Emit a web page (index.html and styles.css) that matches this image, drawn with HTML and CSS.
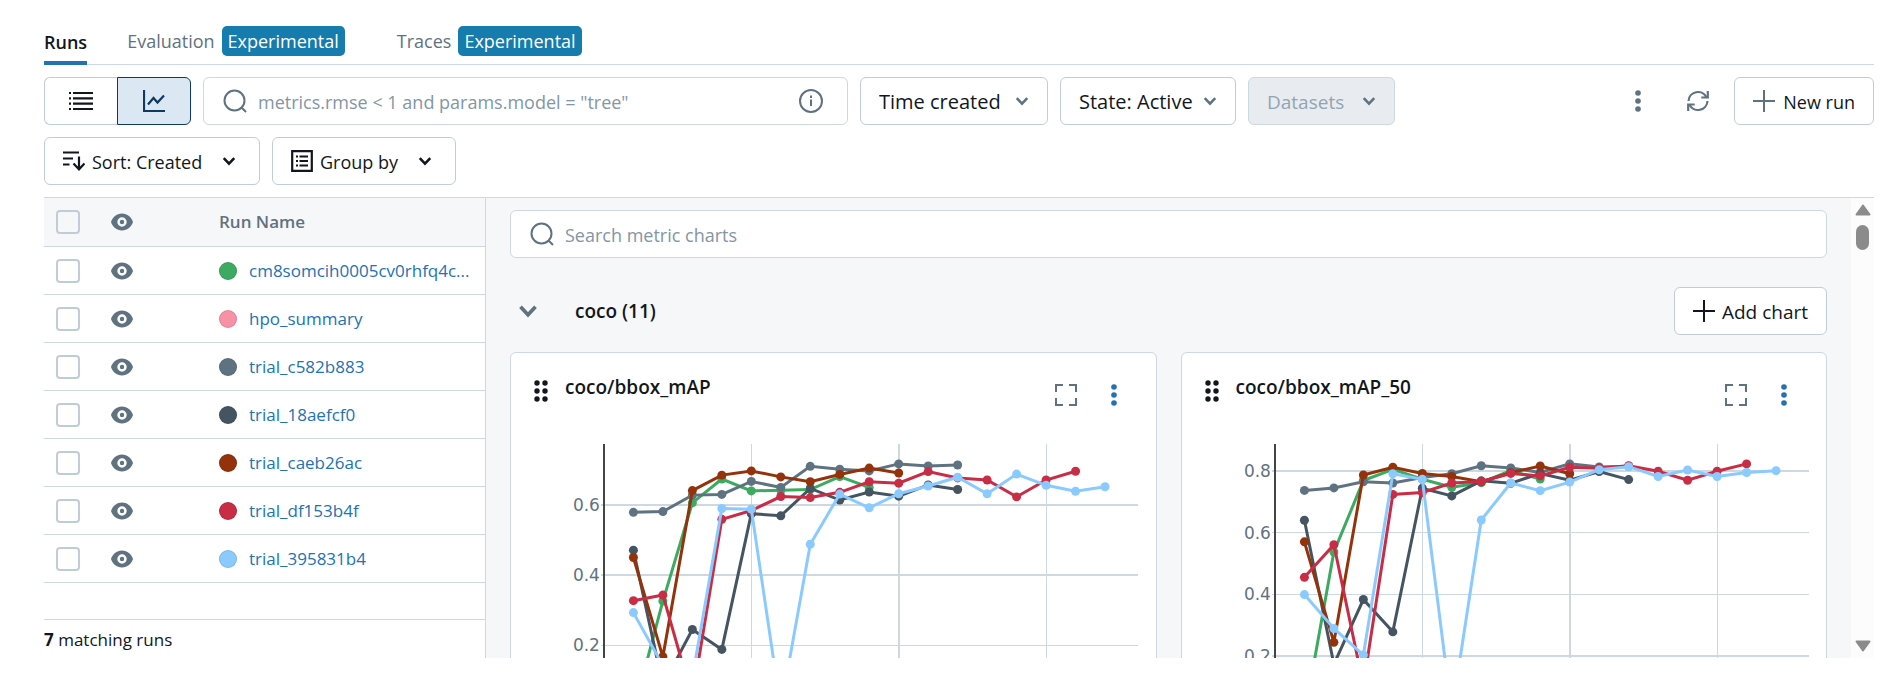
FILE: index.html
```html
<!DOCTYPE html>
<html lang="en">
<head>
<meta charset="utf-8">
<title>Runs</title>
<link rel="stylesheet" href="styles.css">
</head>
<body>
<svg class="sprite" aria-hidden="true">
  <symbol id="chevron" viewBox="0 0 12 12"><path d="M1.5 3.5 6 8.3l4.500-4.800" fill="none" stroke="currentColor" stroke-width="2.200"/></symbol>
  <symbol id="search" viewBox="0 0 24 24"><circle cx="11.500" cy="11.500" r="10" fill="none" stroke="currentColor" stroke-width="2"/><path d="m18.500 18.500 4.500 4.500" stroke="currentColor" stroke-width="2"/></symbol>
  <symbol id="plus" viewBox="0 0 22 22"><path d="M11 0v22M0 11h22" stroke="currentColor" stroke-width="2"/></symbol>
  <symbol id="kebab" viewBox="0 0 6 22"><g fill="currentColor"><circle cx="3" cy="3" r="2.800"/><circle cx="3" cy="11" r="2.800"/><circle cx="3" cy="19" r="2.800"/></g></symbol>
  <symbol id="eye" viewBox="0 0 22 18"><path fill="currentColor" fill-rule="evenodd" d="M11 .5C5.500.5 1.500 4.500 0 9c1.500 4.500 5.500 8.500 11 8.500S20.500 13.500 22 9C20.500 4.500 16.500.5 11 .5Zm0 3.800a4.700 4.700 0 1 1 0 9.400 4.700 4.700 0 0 1 0-9.400Z"/><circle cx="11" cy="9" r="2.200" fill="currentColor"/></symbol>
  <symbol id="grip" viewBox="0 0 14 22"><g fill="currentColor"><circle cx="3" cy="3" r="2.700"/><circle cx="11" cy="3" r="2.700"/><circle cx="3" cy="11" r="2.700"/><circle cx="11" cy="11" r="2.700"/><circle cx="3" cy="19" r="2.700"/><circle cx="11" cy="19" r="2.700"/></g></symbol>
  <symbol id="expand" viewBox="0 0 22 22"><path d="M1 8V1h7M14 1h7v7M21 14v7h-7M8 21H1v-7" fill="none" stroke="currentColor" stroke-width="2"/></symbol>
</svg>

<nav class="tabs">
  <a class="tab tab-active" href="#runs">Runs</a>
  <a class="tab" href="#evaluation">Evaluation <span class="badge">Experimental</span></a>
  <a class="tab" href="#traces">Traces <span class="badge">Experimental</span></a>
</nav>

<div class="toolbar">
  <div class="segmented">
    <button class="segment" type="button" aria-label="List view">
      <svg width="24" height="20" viewBox="0 0 24 20"><path d="M4 2h20M4 7.300h20M4 12.600h20M4 18h20M0 2h2M0 7.300h2M0 12.600h2M0 18h2" stroke="currentColor" stroke-width="2.200"/></svg>
    </button>
    <button class="segment segment-active" type="button" aria-label="Chart view">
      <svg width="22" height="22" viewBox="0 0 22 22"><path d="M1 0v21h21M5 14.500l5.500-6.500 4 4.500L21 5.500" fill="none" stroke="currentColor" stroke-width="2.200"/></svg>
    </button>
  </div>
  <label class="search-box search-runs">
    <svg class="icon" width="24" height="24"><use href="#search"/></svg>
    <input type="text" aria-label="Search runs" placeholder="metrics.rmse &lt; 1 and params.model = &quot;tree&quot;">
    <svg class="icon" width="24" height="24" viewBox="0 0 24 24"><circle cx="12" cy="12" r="11" fill="none" stroke="currentColor" stroke-width="2"/><path d="M12 10.500V17M12 6.500v2.500" stroke="currentColor" stroke-width="2"/></svg>
  </label>
  <label class="dropdown dropdown-time">
    <select aria-label="Time created"><option>Time created</option></select>
    <svg class="icon" width="14" height="14"><use href="#chevron"/></svg>
  </label>
  <label class="dropdown dropdown-state">
    <select aria-label="State"><option>State: Active</option></select>
    <svg class="icon" width="14" height="14"><use href="#chevron"/></svg>
  </label>
  <label class="dropdown dropdown-datasets">
    <select aria-label="Datasets" disabled><option>Datasets</option></select>
    <svg class="icon" width="14" height="14"><use href="#chevron"/></svg>
  </label>
  <div class="toolbar-end">
    <button class="icon-button" type="button" aria-label="More options"><svg width="6" height="22"><use href="#kebab"/></svg></button>
    <button class="icon-button" type="button" aria-label="Refresh">
      <svg width="22" height="22" viewBox="0 0 22 22"><path d="M1.500 11A9.500 9.500 0 0 1 19.500 7.300M20.500 11A9.500 9.500 0 0 1 2.500 14.700" fill="none" stroke="currentColor" stroke-width="2.200"/><path d="M20.800 1v6.500h-6.500M1.200 21v-6.500h6.500" fill="none" stroke="currentColor" stroke-width="2.200"/></svg>
    </button>
    <button class="button button-new" type="button"><svg class="icon" width="22" height="22"><use href="#plus"/></svg><span>New run</span></button>
  </div>
</div>

<div class="toolbar toolbar-second">
  <label class="dropdown dropdown-sort">
    <svg width="22" height="20" viewBox="0 0 22 20"><path d="M0 1.500h16M0 7.500h10M0 13.500h6.500M16 5.500V18M10.500 12.500l5.500 5.800 5.500-5.800" fill="none" stroke="currentColor" stroke-width="2.200"/></svg>
    <select aria-label="Sort"><option>Sort: Created</option></select>
    <svg width="14" height="14"><use href="#chevron"/></svg>
  </label>
  <label class="dropdown dropdown-group">
    <svg width="22" height="22" viewBox="0 0 22 22"><path d="M1.200 1.200h19.600v19.600H1.200zM8.500 6.500h8.500M8.500 11h8.500M8.500 15.500h8.500M5 6.500h2M5 11h2M5 15.500h2" fill="none" stroke="currentColor" stroke-width="2.200"/></svg>
    <select aria-label="Group by"><option>Group by</option></select>
    <svg width="14" height="14"><use href="#chevron"/></svg>
  </label>
</div>

<main class="content">
  <section class="runs">
    <table class="runs-table">
      <colgroup><col class="col-check"><col class="col-eye"><col></colgroup>
      <thead>
        <tr><th><input type="checkbox" aria-label="Select all runs"></th><th><svg width="22" height="18"><use href="#eye"/></svg></th><th>Run Name</th></tr>
      </thead>
      <tbody>
        <tr><td><input type="checkbox" aria-label="Select run"></td><td><svg width="22" height="18"><use href="#eye"/></svg></td><td><span class="run"><i class="dot dot-green"></i><a href="#run1">cm8somcih0005cv0rhfq4c...</a></span></td></tr>
        <tr><td><input type="checkbox" aria-label="Select run"></td><td><svg width="22" height="18"><use href="#eye"/></svg></td><td><span class="run"><i class="dot dot-pink"></i><a href="#run2">hpo_summary</a></span></td></tr>
        <tr><td><input type="checkbox" aria-label="Select run"></td><td><svg width="22" height="18"><use href="#eye"/></svg></td><td><span class="run"><i class="dot dot-slate"></i><a href="#run3">trial_c582b883</a></span></td></tr>
        <tr><td><input type="checkbox" aria-label="Select run"></td><td><svg width="22" height="18"><use href="#eye"/></svg></td><td><span class="run"><i class="dot dot-dark"></i><a href="#run4">trial_18aefcf0</a></span></td></tr>
        <tr><td><input type="checkbox" aria-label="Select run"></td><td><svg width="22" height="18"><use href="#eye"/></svg></td><td><span class="run"><i class="dot dot-brown"></i><a href="#run5">trial_caeb26ac</a></span></td></tr>
        <tr><td><input type="checkbox" aria-label="Select run"></td><td><svg width="22" height="18"><use href="#eye"/></svg></td><td><span class="run"><i class="dot dot-red"></i><a href="#run6">trial_df153b4f</a></span></td></tr>
        <tr><td><input type="checkbox" aria-label="Select run"></td><td><svg width="22" height="18"><use href="#eye"/></svg></td><td><span class="run"><i class="dot dot-blue"></i><a href="#run7">trial_395831b4</a></span></td></tr>
      </tbody>
    </table>
    <p class="runs-footer"><b>7</b> matching runs</p>
  </section>

  <section class="charts">
    <label class="search-box">
      <svg class="icon" width="24" height="24"><use href="#search"/></svg>
      <input type="text" aria-label="Search metric charts" placeholder="Search metric charts">
    </label>
    <div class="section-head">
      <button class="collapse" type="button" aria-label="Collapse section"><svg width="20" height="20"><use href="#chevron"/></svg></button>
      <h2>coco (11)</h2>
      <button class="button button-add" type="button"><svg width="22" height="22"><use href="#plus"/></svg><span>Add chart</span></button>
    </div>
    <div class="cards">
      <article class="card">
        <header class="card-head">
          <svg class="grip" width="14" height="22"><use href="#grip"/></svg>
          <h3>coco/bbox_mAP</h3>
          <button class="icon-button" type="button" aria-label="Full screen"><svg width="22" height="22"><use href="#expand"/></svg></button>
          <button class="icon-button card-menu" type="button" aria-label="Chart options"><svg width="6" height="22"><use href="#kebab"/></svg></button>
        </header>
        <svg class="chart" id="chart-map" viewBox="0 0 645 320" role="img" aria-label="coco/bbox_mAP"></svg>
      </article>
      <article class="card">
        <header class="card-head">
          <svg class="grip" width="14" height="22"><use href="#grip"/></svg>
          <h3>coco/bbox_mAP_50</h3>
          <button class="icon-button" type="button" aria-label="Full screen"><svg width="22" height="22"><use href="#expand"/></svg></button>
          <button class="icon-button card-menu" type="button" aria-label="Chart options"><svg width="6" height="22"><use href="#kebab"/></svg></button>
        </header>
        <svg class="chart" id="chart-map50" viewBox="0 0 645 320" role="img" aria-label="coco/bbox_mAP_50"></svg>
      </article>
    </div>
  </section>

  <div class="scrollbar" aria-hidden="true">
    <svg width="16" height="12" viewBox="0 0 16 12"><path d="M8 1.500 14.500 10.500H1.500Z" fill="currentColor" stroke="currentColor" stroke-width="2" stroke-linejoin="round"/></svg>
    <span class="thumb"></span>
    <svg class="scroll-down" width="16" height="12" viewBox="0 0 16 12"><path d="M8 10.500 14.500 1.500H1.500Z" fill="currentColor" stroke="currentColor" stroke-width="2" stroke-linejoin="round"/></svg>
  </div>
</main>
<script src="charts.js"></script>
</body>
</html>
```

FILE: charts.js
```js
const LEFT = 93, RIGHT = 627, TOP = 16, BOTTOM = 310, STEP = 29.5;

function add(parent, name, attrs, text) {
  const node = document.createElementNS("http://www.w3.org/2000/svg", name);
  for (const key in attrs) node.setAttribute(key, attrs[key]);
  if (text) node.textContent = text;
  parent.appendChild(node);
}

function drawChart(id, scale, series) {
  const svg = document.getElementById(id);
  const yOf = v => scale.refY + (scale.ref - v) * scale.perUnit;
  const xOf = n => LEFT + n * STEP;
  for (const [n, w] of [[5, 1], [10, 2], [15, 1]]) {
    add(svg, "line", { x1: xOf(n), x2: xOf(n), y1: TOP, y2: BOTTOM, class: "grid", "stroke-width": w });
  }
  for (const [v, w] of scale.ticks) {
    add(svg, "line", { x1: LEFT - 3, x2: RIGHT, y1: yOf(v), y2: yOf(v), class: "grid", "stroke-width": w });
    add(svg, "text", { x: LEFT - 4, y: yOf(v) + 6, class: "tick" }, v.toFixed(1));
  }
  add(svg, "line", { x1: LEFT, x2: LEFT, y1: TOP, y2: BOTTOM, class: "axis" });
  for (const [name, values] of series) {
    const points = values.map((v, i) => [xOf(i + 1), yOf(v)]);
    add(svg, "polyline", { points: points.join(" "), class: "line line-" + name });
    for (const [cx, cy] of points) add(svg, "circle", { cx, cy, r: 4.5, class: "mark-" + name });
  }
}

drawChart("chart-map", { ref: 0.6, refY: 77, perUnit: 351, ticks: [[0.6, 2], [0.4, 2], [0.2, 1]] }, [
  ["green", [.01, .326, .606, .674, .64, .642, .644, .681, .65]],
  ["slate", [.579, .581, .628, .63, .667, .65, .71, .702, .697, .717, .711, .714]],
  ["dark", [.471, .086, .245, .188, .575, .569, .647, .614, .637, .625, .657, .644]],
  ["brown", [.45, .167, .641, .685, .697, .68, .666, .687, .705, .691]],
  ["red", [.327, .343, .05, .559, .584, .624, .621, .636, .666, .662, .695, .677, .671, .623, .671, .696]],
  ["blue", [.293, .142, .108, .59, .588, .02, .488, .631, .592, .632, .654, .679, .632, .688, .656, .639, .652]]
]);

drawChart("chart-map50", { ref: 0.8, refY: 43, perUnit: 308.5, ticks: [[0.8, 2], [0.6, 1], [0.4, 1], [0.2, 2]] }, [
  ["green", [.005, .537, .769, .805, .773, .747, .762, .801, .774]],
  ["slate", [.737, .745, .765, .761, .779, .791, .817, .81, .795, .823, .813, .815]],
  ["dark", [.64, .173, .383, .278, .744, .719, .768, .76, .792, .77, .798, .772]],
  ["brown", [.57, .244, .787, .812, .792, .782, .765, .794, .816, .791]],
  ["red", [.455, .561, .105, .724, .73, .761, .766, .792, .784, .812, .809, .817, .799, .77, .799, .823]],
  ["blue", [.399, .289, .203, .791, .773, .015, .641, .761, .736, .764, .804, .814, .782, .803, .782, .795, .801]]
]);
```

FILE: styles.css
```css
* { box-sizing: border-box; }

body {
  margin: 0;
  height: 100vh;
  padding: 20px 23px 19px 44px;
  display: flex;
  flex-direction: column;
  background: #fff;
  color: #11171c;
  font: 18px/24px "Open Sans", "Noto Sans", sans-serif;
}

svg { flex: none; display: block; }
button, input, select { font: inherit; color: inherit; }
h2, h3, p { margin: 0; font-size: inherit; }
a { text-decoration: none; }

.sprite { position: absolute; width: 0; height: 0; }
.icon { color: #5f7281; }

.tabs {
  display: flex;
  gap: 40px;
  flex: none;
  border-bottom: 1px solid #cdd8e1;
}
.tab {
  display: flex;
  align-items: center;
  gap: 7px;
  height: 44px;
  padding: 0 12px 2px 0;
  color: #5f7281;
}
.tab-active {
  margin-bottom: -1px;
  height: 45px;
  padding: 2px 0 0;
  border-bottom: 4px solid #2272b4;
  color: #11171c;
  font-weight: 600;
}
.badge {
  height: 30px;
  padding: 0 6px;
  border-radius: 5px;
  background: #157cad;
  color: #fff;
  line-height: 30px;
}

.toolbar {
  display: flex;
  flex: none;
  gap: 12px;
  padding-top: 12px;
}
.toolbar-second { padding-bottom: 12px; }
.toolbar-end {
  display: flex;
  align-items: center;
  gap: 12px;
  margin-left: auto;
}

.segmented { display: flex; }
.segment {
  width: 73px;
  height: 48px;
  display: flex;
  align-items: center;
  justify-content: center;
  border: 1px solid #c0cdd8;
  border-right: 0;
  border-radius: 6px 0 0 6px;
  background: #fff;
}
.segment-active {
  width: 74px;
  border: 1px solid #0e3a60;
  border-radius: 0 6px 6px 0;
  background: #dbe7f2;
  color: #0e3a60;
}

.search-box {
  display: flex;
  align-items: center;
  gap: 11px;
  height: 48px;
  padding: 0 24px 0 19px;
  border: 1px solid #cdd8e1;
  border-radius: 6px;
  background: #fff;
}
.search-runs { flex: 0 1 645px; }
.search-box input {
  flex: 1;
  min-width: 0;
  padding: 2px 0 0;
  border: 0;
  outline: 0;
  background: none;
}
.search-box input::placeholder { color: #8396a5; opacity: 1; }

.dropdown {
  display: flex;
  align-items: center;
  height: 48px;
  padding: 0 18px;
  border: 1px solid #c0cdd8;
  border-radius: 6px;
  background: #fff;
}
.dropdown select {
  flex: 1;
  min-width: 0;
  padding: 2px 0 0;
  border: 0;
  outline: 0;
  appearance: none;
  background: none;
  opacity: 1;
}
.dropdown-time { width: 188px; font-size: 20px; }
.dropdown-state { width: 176px; font-size: 20px; }
.dropdown-datasets {
  width: 147px;
  border-color: #cdd8e1;
  background: #e8ecf0;
  color: #92a4b3;
  font-size: 19px;
}
.dropdown-sort { width: 216px; gap: 7px; padding-right: 23px; }
.dropdown-group { width: 184px; gap: 7px; padding-right: 23px; }

.button {
  display: flex;
  align-items: center;
  gap: 8px;
  height: 48px;
  padding: 0 18px;
  border: 1px solid #c0cdd8;
  border-radius: 6px;
  background: #fff;
}
.button span { padding-top: 2px; }
.icon-button {
  width: 48px;
  height: 48px;
  padding: 0;
  display: flex;
  align-items: center;
  justify-content: center;
  border: 0;
  background: none;
  color: #5f7281;
}

.content {
  display: flex;
  flex: 1;
  min-height: 0;
  overflow: hidden;
  border-top: 1px solid #cdd8e1;
}

.runs {
  flex: none;
  width: 442px;
  display: flex;
  flex-direction: column;
  border-right: 1px solid #cdd8e1;
  font-size: 17px;
}
.runs-table {
  width: 100%;
  table-layout: fixed;
  border-collapse: separate;
  border-spacing: 0;
}
.col-check { width: 67px; }
.col-eye { width: 108px; }
.runs-table th,
.runs-table td {
  height: 48px;
  padding: 0;
  border-bottom: 1px solid #cdd8e1;
  text-align: left;
  vertical-align: middle;
}
.runs-table th {
  height: 49px;
  background: #f6f7f9;
  color: #5f7281;
  font-weight: 600;
}
.runs-table svg { color: #5f7281; }
.runs-table input {
  appearance: none;
  display: block;
  width: 24px;
  height: 24px;
  margin: 0 0 0 12px;
  border: 2px solid #c0cdd8;
  border-radius: 4px;
}
.run { display: flex; align-items: center; gap: 12px; }
.run a { color: #2272b4; }
.dot {
  width: 18px;
  height: 18px;
  border: 1px solid rgba(0, 0, 0, 0.1);
  border-radius: 50%;
}
.dot-green { background: #3caa60; }
.dot-pink { background: #f792a6; }
.dot-slate { background: #5f7281; }
.dot-dark { background: #445461; }
.dot-brown { background: #93320b; }
.dot-red { background: #c82d45; }
.dot-blue { background: #8acaff; }
.runs-footer {
  margin-top: auto;
  height: 39px;
  padding-top: 8px;
  border-top: 1px solid #cdd8e1;
}

.charts {
  flex: 1;
  min-width: 0;
  padding: 12px 24px 0;
  background: #f6f7f9;
}
.section-head {
  display: flex;
  align-items: center;
  padding: 29px 0 17px;
}
.section-head h2,
.card-head h3 {
  font-size: 19px;
  font-weight: 600;
}
.collapse {
  width: 36px;
  padding: 0 8px;
  margin-right: 29px;
  border: 0;
  background: none;
  color: #5f7281;
}
.button-add { margin-left: auto; font-size: 19px; gap: 7px; }

.cards {
  display: grid;
  grid-template-columns: 1fr 1fr;
  gap: 24px;
}
.card {
  border: 1px solid #cdd8e1;
  border-radius: 6px;
  background: #fff;
}
.card-head {
  display: flex;
  align-items: center;
  padding: 18px 18px 9px 23px;
}
.card-head h3 {
  align-self: flex-start;
  flex: 1;
  padding: 4px 0 0 17px;
}
.grip { margin-bottom: 8px; }
.card-menu { color: #2272b4; }

.chart { width: 100%; height: auto; }
.grid { stroke: #cdd8e1; shape-rendering: crispEdges; }
.axis { stroke: #444; stroke-width: 2; shape-rendering: crispEdges; }
.tick {
  fill: #5f7281;
  font: 17px "DejaVu Sans", sans-serif;
  text-anchor: end;
}
.line { fill: none; stroke-width: 3; }
.line-green { stroke: #3caa60; }
.line-slate { stroke: #5f7281; }
.line-dark { stroke: #445461; }
.line-brown { stroke: #93320b; }
.line-red { stroke: #c82d45; }
.line-blue { stroke: #8acaff; }
.mark-green { fill: #3caa60; }
.mark-slate { fill: #5f7281; }
.mark-dark { fill: #445461; }
.mark-brown { fill: #93320b; }
.mark-red { fill: #c82d45; }
.mark-blue { fill: #8acaff; }

.scrollbar {
  width: 23px;
  flex: none;
  display: flex;
  flex-direction: column;
  align-items: center;
  padding: 6px 0;
  background: #fcfcfc;
  color: #8b8b8b;
}
.thumb {
  width: 13px;
  height: 25px;
  margin-top: 9px;
  border-radius: 7px;
  background: #8b8b8b;
}
.scroll-down { margin-top: auto; }
```
